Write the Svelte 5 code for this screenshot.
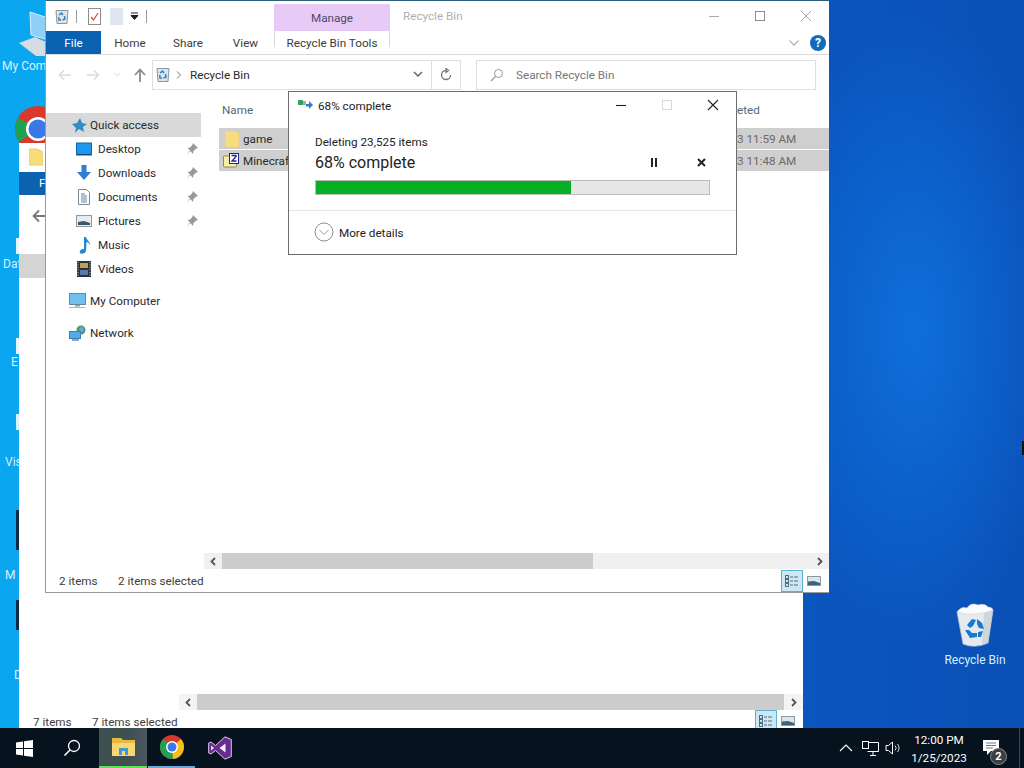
<script>
  const pinned = [
    { label: 'Desktop', kind: 'desktop' },
    { label: 'Downloads', kind: 'downloads' },
    { label: 'Documents', kind: 'documents' },
    { label: 'Pictures', kind: 'pictures' }
  ];
  const percent = 68;
</script>

{#snippet bin(w, h)}
  <svg width={w} height={h} viewBox="0 0 40 44">
    <path d="M2 9 L38 7 L33 40 Q20 46 8 41 Z" fill="#e6eaee" stroke="#b4c0c9" stroke-width=".8"/>
    <path d="M27 41 L33 40 L38 7 L29 10Z" fill="#c8d0d6" opacity=".8"/>
    <path d="M2 9 Q6 3 12 5 Q16 -1 23 2 Q30 0 33 4 Q37 4 38 7 Q20 14 2 9Z" fill="#fbfcfd" stroke="#cfd8de" stroke-width=".6"/>
    <path d="M12 22 L17 16 L21 17 L18 23 L15 25 Z M22 16 L27 20 L29 26 L24 25 L22 21 Z M10 27 L14 27 L17 30 L22 30 L22 34 L15 35 Z M23 29 L28 28 L26 34 L23 34 Z" fill="#1679d2"/>
  </svg>
{/snippet}

{#snippet qbin(w, h)}
  <svg width={w} height={h} viewBox="0 0 14 15"><path d="M1 1.500h12l-1 13H2Z" fill="#dfe4e8" stroke="#8b959c"/><path d="M4 6l2.500-2 1.500 2M9.500 7L10 10 7.500 11M6 11H4L3.800 8" fill="none" stroke="#2a84cc" stroke-width="1.500"/></svg>
{/snippet}

{#snippet chevL()}
  <svg width="6" height="9" viewBox="0 0 6 9"><path d="M5 1L1.500 4.500 5 8" fill="none" stroke="#555" stroke-width="1.800"/></svg>
{/snippet}
{#snippet chevR()}
  <svg width="6" height="9" viewBox="0 0 6 9"><path d="M1 1l3.500 3.500L1 8" fill="none" stroke="#555" stroke-width="1.800"/></svg>
{/snippet}

{#snippet views()}
  <div class="views">
    <span class="view on">
      <svg width="22" height="22" viewBox="0 0 22 22"><g fill="none" stroke="#5b6b78"><rect x="4.500" y="5.500" width="3" height="3"/><rect x="4.500" y="9.500" width="3" height="3"/><rect x="4.500" y="13.500" width="3" height="3"/><path d="M9 7h3M13 7h4M9 11h3M13 11h4M9 15h3M13 15h4"/></g></svg>
    </span>
    <span class="view">
      <svg width="16" height="22" viewBox="0 0 16 22"><rect x="1.500" y="6.500" width="13" height="9" fill="#dbe6ec" stroke="#8b98a2"/><path d="M2 15 L2 11.500 L8 11 L14 13 L14 15Z" fill="#3d6478"/></svg>
    </span>
  </div>
{/snippet}

{#snippet navIcon(kind)}
  {#if kind === 'desktop'}
    <svg width="16" height="14" viewBox="0 0 16 14"><rect x=".5" y="1" width="15" height="12" fill="#1b97ec" stroke="#0f63a8"/><path d="M1 12.500h14" stroke="#0b4a80"/></svg>
  {:else if kind === 'downloads'}
    <svg width="16" height="16" viewBox="0 0 16 16"><path d="M5.500 0h5v7H15L8 15 1 7h4.500Z" fill="#2f7fd0"/></svg>
  {:else if kind === 'documents'}
    <svg width="12" height="16" viewBox="0 0 12 16"><path d="M.5.500h8l3 3v12H.5Z" fill="#fff" stroke="#7f8c95"/><path d="M3 5h4M3 7h6M3 9h6M3 11h6M3 13h6" stroke="#5d87a5"/></svg>
  {:else if kind === 'pictures'}
    <svg width="16" height="12" viewBox="0 0 16 12"><rect x=".5" y=".5" width="15" height="11" fill="#e6edf2" stroke="#8d99a3"/><path d="M2 10V7l6-1 6 2v2Z" fill="#3c5866"/></svg>
  {:else if kind === 'music'}
    <svg width="13" height="17" viewBox="0 0 13 17"><path d="M6 0h2c.5 3 4 4 4 8-1-2-2-3-3.500-3L8 14c-.3 2-3.500 3.500-5.500 2.500C.5 15 2.500 11.500 6 12Z" fill="#1f88d8"/></svg>
  {:else if kind === 'videos'}
    <svg width="14" height="16" viewBox="0 0 14 16"><rect width="14" height="16" fill="#2c3038"/><rect x="3" y="2" width="8" height="5" fill="#b9a054"/><rect x="3" y="9" width="8" height="5" fill="#5c78a8"/><path d="M1 1v14M13 1v14" stroke="#cfd4d8" stroke-dasharray="1 1.500"/></svg>
  {:else if kind === 'computer'}
    <svg width="17" height="16" viewBox="0 0 17 16"><rect x=".5" y=".5" width="16" height="11" fill="#6fc0ee" stroke="#6d8797"/><path d="M6 12h5v1.500H6Z" fill="#8ea0ac"/><path d="M0 14.500h16" stroke="#a8b4bc"/></svg>
  {:else if kind === 'network'}
    <svg width="17" height="16" viewBox="0 0 17 16"><circle cx="12" cy="5" r="4.500" fill="#4a9b78"/><path d="M10 3l3-1 2 3-3 3Z" fill="#6ba8d8"/><rect x=".5" y="6.500" width="11" height="7" fill="#53ace6" stroke="#3a7fb0"/><path d="M3 15h7" stroke="#6c8a9c" stroke-width="1.500"/></svg>
  {/if}
{/snippet}

<div class="desktop">
  <div class="wall"></div>

  <div class="dicon pc">
    <svg width="30" height="46" viewBox="0 0 30 46"><path d="M12 2 L30 8 V30 L13 25Z" fill="#8fd0f6" stroke="#d8eefb"/><path d="M1 33 L17 27 L30 33 V46 H18Z" fill="#d5dde2"/></svg>
  </div>
  <span class="dlabel" style="left:2px;top:58px">My Com</span>
  <div class="chrome-back">
    <svg width="46" height="46" viewBox="0 0 46 46"><circle cx="23" cy="23" r="23" fill="#d8392c"/><path d="M23 23 L4 36 A23 23 0 0 1 3 12Z" fill="#1fa254"/><circle cx="23" cy="23" r="12" fill="#fff"/><circle cx="23" cy="23" r="9.500" fill="#3878e8"/></svg>
  </div>
  <span class="dlabel" style="left:3px;top:256px">Dat</span>
  <span class="dlabel" style="left:11px;top:354px">E</span>
  <span class="dlabel" style="left:5px;top:454px">Vis</span>
  <span class="dlabel" style="left:5px;top:567px">M</span>
  <span class="dlabel" style="left:14px;top:667px">D</span>
  <i class="nub" style="top:238px"></i><i class="nub" style="top:338px"></i><i class="nub" style="top:414px;background:#d9f1fb"></i><i class="nub" style="top:510px;height:40px;background:#0b2a48"></i><i class="nub" style="top:600px;height:30px;background:#0b2a48"></i>

  <div class="dicon rb">
    {@render bin(40, 44)}
    <span class="rbl">Recycle Bin</span>
  </div>

  <!-- window behind -->
  <section class="back">
    <div class="back-head">
      <div class="back-tb">
        <svg width="14" height="18" viewBox="0 0 14 18"><path d="M0 1h8l6 3v13H0Z" fill="#f7dc7c" stroke="#e8cd70"/></svg>
      </div>
      <div class="back-file">F</div>
      <div class="back-nav">
        <svg width="14" height="14" viewBox="0 0 14 14"><path d="M14 7H2M7 1.500L1.500 7 7 12.500" fill="none" stroke="#7a7a7a" stroke-width="1.800"/></svg>
      </div>
      <div class="back-gray"></div>
    </div>
    <div class="spacer"></div>
    <div class="hscroll back-scroll">
      <span class="arrow">{@render chevL()}</span>
      <span class="thumb"></span>
      <span class="arrow end">{@render chevR()}</span>
    </div>
    <div class="status back-status">
      <span class="s1">7 items</span><span class="s2">7 items selected</span>
      {@render views()}
    </div>
  </section>

  <!-- explorer window -->
  <section class="win">
    <header class="title">
      <div class="qat">
        {@render qbin(14, 15)}
        <i class="sep"></i>
        <svg width="13" height="17" viewBox="0 0 13 17"><rect x=".5" y=".5" width="12" height="16" fill="#fff" stroke="#8c8c8c"/><path d="M3 9l2.500 3L10 5" fill="none" stroke="#d6473a" stroke-width="1.200"/></svg>
        <span class="blank"></span>
        <svg class="caret" width="9" height="8" viewBox="0 0 9 8"><path d="M1 1h7M1 3.500h7L4.500 7.500Z" stroke="#222" fill="#222"/></svg>
        <i class="sep last"></i>
      </div>
      <div class="manage">Manage</div>
      <div class="wname">Recycle Bin</div>
      <div class="caps">
        <svg width="14" height="14" viewBox="0 0 14 14"><path d="M2 7.500h10" stroke="#a9a9a9"/></svg>
        <svg width="14" height="14" viewBox="0 0 14 14"><rect x="2.500" y="2.500" width="9" height="9" fill="none" stroke="#8f8f8f"/></svg>
        <svg width="14" height="14" viewBox="0 0 14 14"><path d="M2 2l10 10M12 2L2 12" stroke="#a9a9a9"/></svg>
      </div>
    </header>

    <nav class="tabs">
      <span class="file">File</span>
      <span class="tab">Home</span>
      <span class="tab">Share</span>
      <span class="tab">View</span>
      <span class="rbt">Recycle Bin Tools</span>
      <span class="grow"></span>
      <svg width="12" height="8" viewBox="0 0 12 8"><path d="M1.500 1.500L6 6l4.500-4.500" fill="none" stroke="#b5b5b5" stroke-width="1.300"/></svg>
      <span class="help">?</span>
    </nav>

    <div class="addr">
      <div class="navs">
        <svg width="16" height="14" viewBox="0 0 16 14"><path d="M14 7H3M7 2.500L2.500 7 7 11.500" fill="none" stroke="#dcdcdc" stroke-width="1.600"/></svg>
        <svg width="16" height="14" viewBox="0 0 16 14"><path d="M2 7h11M9 2.500L13.500 7 9 11.500" fill="none" stroke="#dcdcdc" stroke-width="1.600"/></svg>
        <svg width="8" height="6" viewBox="0 0 8 6"><path d="M1 1l3 3 3-3" fill="none" stroke="#e0e0e0"/></svg>
        <svg width="14" height="16" viewBox="0 0 14 16"><path d="M7 15V3M2 8l5-5.500L12 8" fill="none" stroke="#8a8a8a" stroke-width="1.800"/></svg>
      </div>
      <div class="pathbox">
        {@render qbin(14, 15)}
        <svg width="6" height="8" viewBox="0 0 6 8"><path d="M1 .5L4.500 4 1 7.500" fill="none" stroke="#777"/></svg>
        <span class="pname">Recycle Bin</span>
        <span class="grow"></span>
        <svg class="dd" width="10" height="7" viewBox="0 0 10 7"><path d="M1 1l4 4 4-4" fill="none" stroke="#666" stroke-width="1.500"/></svg>
        <span class="refresh">
          <svg width="12" height="13" viewBox="0 0 12 13"><path d="M6 2.500A4.500 4.500 0 1 0 10.500 7M6 .5v4L8.500 2.500Z" fill="none" stroke="#777" stroke-width="1.300"/></svg>
        </span>
      </div>
      <div class="search">
        <svg width="14" height="14" viewBox="0 0 14 14"><circle cx="8.500" cy="5.500" r="4" fill="none" stroke="#9a9a9a"/><path d="M5.500 8.500L1 13" stroke="#9a9a9a" stroke-width="1.300"/></svg>
        <span>Search Recycle Bin</span>
      </div>
    </div>

    <div class="main">
      <aside class="side">
        <div class="nav-row qa">
          <svg width="16" height="15" viewBox="0 0 16 15"><path d="M9 0l2 5 5 1-4 3 1 5-5-3-4 4 1-5L1 6l5-1Z" fill="#2f8dc8"/></svg>
          <span>Quick access</span>
        </div>
        {#each pinned as p}
          <div class="nav-row sub">
            <span class="ni">{@render navIcon(p.kind)}</span>
            <span>{p.label}</span>
            <svg class="pin" width="12" height="12" viewBox="0 0 12 12"><path d="M7 0l5 5-2 .8L7.500 8 7 11 4.500 8 1 11.500 4 7.500 1.500 5 4 4.500 6.200 2.200Z" fill="#9a9a9a"/></svg>
          </div>
        {/each}
        <div class="nav-row sub"><span class="ni">{@render navIcon('music')}</span><span>Music</span></div>
        <div class="nav-row sub"><span class="ni">{@render navIcon('videos')}</span><span>Videos</span></div>
        <div class="nav-row top gap"><span class="ni2">{@render navIcon('computer')}</span><span>My Computer</span></div>
        <div class="nav-row top gap"><span class="ni2">{@render navIcon('network')}</span><span>Network</span></div>
      </aside>

      <div class="list">
        <div class="lhead">
          <span class="hname">Name</span>
          <span class="hdate">eted</span>
        </div>
        <div class="row">
          <svg width="14" height="16" viewBox="0 0 14 16"><path d="M0 0h9l5 2v14H0Z" fill="#f8dc80" stroke="#ecd078" stroke-width=".6"/></svg>
          <span class="fname">game</span>
          <span class="fdate">3 11:59 AM</span>
        </div>
        <div class="row">
          <svg class="mc" width="16" height="15" viewBox="0 0 16 15"><rect x=".5" y="3" width="13" height="11" rx="1" fill="#f7eea8" stroke="#8a8a5c"/><rect x="6.500" y=".5" width="9" height="10" fill="#fff" stroke="#22228c"/><path d="M8.500 2.500h4.500v1L9 8h4.500" fill="none" stroke="#2020a8" stroke-width="1.300"/></svg>
          <span class="fname">Minecraft</span>
          <span class="fdate">3 11:48 AM</span>
        </div>
        <div class="spacer"></div>
        <div class="hscroll">
          <span class="arrow">{@render chevL()}</span>
          <span class="thumb"></span>
          <span class="arrow end">{@render chevR()}</span>
        </div>
      </div>
    </div>

    <footer class="status">
      <span class="s1">2 items</span><span class="s2">2 items selected</span>
      {@render views()}
    </footer>
  </section>

  <!-- progress dialog -->
  <section class="dialog">
    <header class="dtitle">
      <svg width="15" height="10" viewBox="0 0 15 10"><rect x="0" y="0" width="5" height="5" fill="#3e9e62"/><rect x="5" y="1" width="3" height="4" fill="#9bb7a6"/><path d="M8 4h3V1l4 4-4 4V6.500H8Z" fill="#2f7fc8"/></svg>
      <span class="dname">{percent}% complete</span>
      <span class="grow"></span>
      <div class="dcaps">
        <svg width="12" height="12" viewBox="0 0 12 12"><path d="M1 6.500h10" stroke="#222" stroke-width="1.100"/></svg>
        <svg width="12" height="12" viewBox="0 0 12 12"><rect x="1.500" y="1.500" width="9" height="9" fill="none" stroke="#d8d8d8"/></svg>
        <svg width="12" height="12" viewBox="0 0 12 12"><path d="M1 1l10 10M11 1L1 11" stroke="#222" stroke-width="1.100"/></svg>
      </div>
    </header>
    <div class="dbody">
      <div class="deleting">Deleting 23,525 items</div>
      <div class="pct">
        <span>{percent}% complete</span>
        <span class="grow"></span>
        <svg class="pause" width="8" height="9" viewBox="0 0 8 9"><path d="M1 0h2v9H1ZM5 0h2v9H5Z" fill="#222"/></svg>
        <svg class="stop" width="9" height="9" viewBox="0 0 9 9"><path d="M1 1l7 7M8 1L1 8" stroke="#222" stroke-width="2"/></svg>
      </div>
      <div class="bar"><div class="fill" style="width:{percent * 0.955}%"></div></div>
    </div>
    <div class="more">
      <svg width="20" height="20" viewBox="0 0 20 20"><circle cx="10" cy="10" r="9" fill="none" stroke="#8f8f8f"/><path d="M5.500 8L10 12.500 14.500 8" fill="none" stroke="#9a9a9a"/></svg>
      <span class="mtext">More details</span>
    </div>
  </section>

  <i class="cursor"></i>

  <!-- taskbar -->
  <footer class="taskbar">
    <span class="tb start">
      <svg width="17" height="17" viewBox="0 0 17 17"><path d="M0 2.500l7-1v6.500H0ZM8 1.300L17 0v8H8ZM0 9h7v6.500l-7-1ZM8 9h9v8l-9-1.300Z" fill="#fff"/></svg>
    </span>
    <span class="tb srch">
      <svg width="18" height="18" viewBox="0 0 18 18"><circle cx="11" cy="7" r="5.500" fill="none" stroke="#fff" stroke-width="1.300"/><path d="M7 11l-5.500 5.500" stroke="#fff" stroke-width="1.600"/></svg>
    </span>
    <span class="tb app active">
      <svg width="23" height="20" viewBox="0 0 23 20"><path d="M0 1h9l2 2h12v15H0Z" fill="#e6b93f"/><path d="M0 6h23v13H0Z" fill="#f7d774"/><rect x="7" y="11" width="9" height="7" fill="#3f9bd0"/><rect x="10" y="14" width="3" height="4" fill="#f7d774"/></svg>
    </span>
    <span class="tb app run">
      <svg width="24" height="24" viewBox="0 0 24 24"><circle cx="12" cy="12" r="12" fill="#d8392c"/><path d="M12 12L22.400 18 A12 12 0 0 0 24 12 A12 12 0 0 0 21 4 Z" fill="#f3c21c"/><path d="M12 12 L13 24 A12 12 0 0 1 0 12 A12 12 0 0 1 3 4 Z" fill="#1fa254"/><path d="M12 12 L13 24 A12 12 0 0 0 22.400 18Z" fill="#f3c21c"/><circle cx="12" cy="12" r="6" fill="#fff"/><circle cx="12" cy="12" r="4.500" fill="#3878e8"/></svg>
    </span>
    <span class="tb app">
      <svg width="24" height="24" viewBox="0 0 24 24"><path d="M17 .8L23.300 3.500V20.500L17 23.200 7.500 14.500 3 18 .7 17V7L3 6 7.500 9.500Z" fill="#6b2a8f" stroke="#e9e0f0" stroke-width=".9"/><path d="M17.500 7.500L11.500 12l6 4.500Z" fill="#f4eff7"/><path d="M3.200 9.500L6 12l-2.800 2.500Z" fill="#f4eff7"/></svg>
    </span>
    <span class="grow"></span>
    <div class="tray">
      <svg class="up" width="14" height="8" viewBox="0 0 14 8"><path d="M1 7l6-6 6 6" fill="none" stroke="#fff" stroke-width="1.100"/></svg>
      <svg width="17" height="15" viewBox="0 0 17 15"><path d="M5.500 1.500h11v9h-11M8 14.500h6M11 10.500v4" fill="none" stroke="#fff"/><rect x=".5" y=".5" width="6" height="7" fill="#06121e" stroke="#fff"/></svg>
      <svg width="16" height="14" viewBox="0 0 16 14"><path d="M1 4.500h2.500L7.500 1v12L3.500 9.500H1Z" fill="none" stroke="#fff"/><path d="M10 4.500a3.500 3.500 0 0 1 0 5M12.500 3a6 6 0 0 1 0 8" fill="none" stroke="#ddd"/></svg>
    </div>
    <div class="clock"><span>12:00 PM</span><span>1/25/2023</span></div>
    <div class="notif">
      <svg width="16" height="16" viewBox="0 0 16 16"><path d="M0 0h16v11H8l-4 4v-4H0Z" fill="#fff"/><path d="M3 3h10M3 5.500h10M3 8h7" stroke="#777"/></svg>
      <span class="badge">2</span>
    </div>
    <i class="edge"></i>
  </footer>
</div>

<style>
  :global(body) { margin: 0; overflow: hidden; }
  .desktop {
    position: relative; width: 1024px; height: 768px; overflow: hidden;
    font: 11.7px Roboto, "Noto Sans", sans-serif; color: #2a2a2a;
  }
  .wall {
    position: absolute; inset: 0;
    background:
      radial-gradient(ellipse 150px 320px at 915px 330px, #0f6fdc 0%, rgba(15,111,220,0) 100%),
      linear-gradient(90deg, #0aa6ef 0 60px, #0a55bd 830px, #0a50b6 1024px);
  }
  .grow, .spacer { flex: 1; }
  svg { display: block; flex: none; }

  .dicon { position: absolute; }
  .pc { left: 18px; top: 10px; }
  .chrome-back { position: absolute; left: 15px; top: 106px; }
  .dlabel { position: absolute; color: #d8f1fd; font-size: 12px; line-height: 16px; white-space: nowrap; }
  .nub { position: absolute; left: 16px; width: 3px; height: 16px; background: #e8f6fc; }
  .rb { left: 940px; top: 603px; width: 70px; display: flex; flex-direction: column; align-items: center; gap: 5px; color: #d6eefc; }
  .rbl { font-size: 12px; line-height: 16px; white-space: nowrap; }

  .back {
    position: absolute; left: 19px; top: 143px; width: 784px; height: 589px;
    background: #fff; display: flex; flex-direction: column;
  }
  .back-head { width: 26px; }
  .back-tb { height: 29px; padding: 5px 0 0 10px; box-sizing: border-box; }
  .back-file { height: 23px; background: #0a62b0; color: #fff; padding-left: 20px; box-sizing: border-box; line-height: 23px; }
  .back-nav { height: 59px; box-sizing: border-box; padding: 14px 0 0 13px; }
  .back-gray { height: 24px; background: #d4d4d4; }
  .hscroll { height: 16px; display: flex; align-items: center; background: #f0f0f0; flex: none; }
  .back-scroll { margin-left: 160px; background: #f4f4f4; }
  .arrow { width: 18px; display: flex; justify-content: center; flex: none; }
  .arrow.end { margin-left: auto; }
  .thumb { height: 16px; background: #cdcdcd; }
  .back-scroll .thumb { width: 587px; }
  .status { height: 22px; display: flex; align-items: center; padding-left: 13px; box-sizing: border-box; line-height: 22px; flex: none; color: #3c3c3c; }
  .s1 { width: 59px; }
  .views { margin-left: auto; display: flex; gap: 3px; margin-right: 7px; height: 22px; }
  .view { display: block; height: 22px; box-sizing: border-box; }
  .view.on { background: #cce8f4; outline: 1px solid #5fb0cf; outline-offset: -1px; }
  .back-status { padding-left: 14px; line-height: 24px; }
  .back-status .s1, .back-status .s2 { padding-top: 2px; }

  .win {
    position: absolute; left: 45px; top: 0; width: 784px; height: 593px; box-sizing: border-box;
    background: #fff; display: flex; flex-direction: column;
    border-top: 1px solid #2c5e80; border-left: 1px solid #9a9a9a; border-bottom: 1px solid #9a9a9a;
  }
  .title { height: 30px; display: flex; position: relative; flex: none; }
  .qat { display: flex; align-items: center; height: 30px; padding-left: 9px; width: 228px; box-sizing: border-box; flex: none; }
  .qat .sep { width: 1px; height: 13px; background: #9a9a9a; margin: 0 11px 0 7px; }
  .qat .blank { width: 13px; height: 17px; background: #dfe6f0; margin: 0 7px 0 9px; }
  .qat .sep.last { margin-left: 7px; }
  .manage {
    margin-top: 3px; width: 116px; height: 27px; background: #e7cbf6; color: #4d4a66;
    text-align: center; line-height: 28px; flex: none;
  }
  .wname { margin-left: 13px; color: #b0b0b0; line-height: 30px; }
  .caps { margin-left: auto; display: flex; gap: 32px; padding-top: 8px; padding-right: 16px; box-sizing: border-box; }
  .tabs {
    height: 24px; display: flex; align-items: center; flex: none; box-sizing: border-box;
    border-bottom: 1px solid #dadada; padding-right: 3px;
  }
  .file { width: 55px; height: 23px; line-height: 24px; background: #0a62b0; color: #fff; text-align: center; flex: none; }
  .tab { width: 58px; height: 23px; text-align: center; line-height: 25px; color: #3b3b3b; flex: none; }
  .tab:nth-of-type(4) { width: 57px; }
  .rbt {
    width: 116px; text-align: center; height: 16px; line-height: 25px; flex: none; align-self: flex-start; color: #3b3b3b;
    border-left: 1px solid #d8d8d8; border-right: 1px solid #d8d8d8; box-sizing: border-box;
  }
  .help {
    width: 16px; height: 16px; border-radius: 50%; background: #0f6cbd; color: #fff; font-weight: 700;
    text-align: center; line-height: 16px; margin-left: 10px; font-size: 12px;
  }
  .addr { height: 38px; display: flex; align-items: center; flex: none; padding: 1px 0 0 11px; box-sizing: border-box; }
  .navs { width: 95px; display: flex; align-items: center; gap: 12px; box-sizing: border-box; flex: none; }
  .pathbox {
    width: 309px; height: 30px; border: 1px solid #dedede; box-sizing: border-box; display: flex; align-items: center; flex: none;
    gap: 6px; padding-left: 3px; color: #2a2a2a;
  }
  .pname { margin-left: 2px; }
  .dd { margin-right: 8px; }
  .refresh { width: 28px; height: 28px; border-left: 1px solid #dedede; display: flex; align-items: center; justify-content: center; margin-left: -6px; }
  .search {
    margin-left: 15px; flex: none; width: 340px; height: 30px; border: 1px solid #dedede; box-sizing: border-box;
    display: flex; align-items: center; gap: 12px; padding-left: 13px; color: #787878;
  }
  .main { flex: 1; display: flex; min-height: 0; }
  .side { width: 158px; flex: none; padding-top: 20px; box-sizing: border-box; }
  .nav-row { height: 24px; display: flex; align-items: center; white-space: nowrap; width: 155px; box-sizing: border-box; position: relative; }
  .qa { background: #d9d9d9; padding-left: 25px; gap: 3px; }
  .sub { padding-left: 29px; }
  .ni { width: 18px; display: flex; justify-content: center; margin-right: 5px; }
  .ni2 { width: 18px; display: flex; justify-content: center; margin-right: 4px; }
  .top { padding-left: 22px; }
  .gap { margin-top: 8px; }
  .pin { position: absolute; right: 3px; top: 6px; }
  .list { flex: 1; min-width: 0; display: flex; flex-direction: column; }
  .lhead { height: 35px; position: relative; color: #56667a; }
  .hname { position: absolute; left: 18px; top: 9px; line-height: 16px; }
  .hdate { position: absolute; left: 533px; top: 9px; line-height: 16px; }
  .row {
    margin-left: 15px; height: 21px; margin-bottom: 1px; background: #cfcfcf; display: flex; align-items: center;
    padding-left: 6px; gap: 4px; position: relative; flex: none;
  }
  .mc { margin-left: -2px; }
  .fdate { position: absolute; left: 518px; color: #6a6a6a; }
  .list .hscroll { margin-bottom: 1px; }
  .list .thumb { width: 371px; }

  .dialog {
    position: absolute; left: 288px; top: 91px; width: 449px; height: 164px; box-sizing: border-box;
    background: #fff; border: 1px solid #6d6d6d; display: flex; flex-direction: column; color: #222;
  }
  .dtitle { height: 26px; display: flex; align-items: center; gap: 5px; padding-left: 9px; flex: none; }
  .dname { padding-top: 2px; }
  .dcaps { display: flex; gap: 34px; margin-right: 17px; }
  .dbody { padding: 15px 26px 0; height: 93px; box-sizing: border-box; border-bottom: 1px solid #e6e6e6; flex: none; }
  .deleting { line-height: 18px; }
  .pct { display: flex; align-items: center; font-size: 16px; line-height: 24px; height: 23px; }
  .pause { margin-right: 39px; }
  .stop { margin-right: 4px; }
  .bar { height: 15px; margin-top: 6px; background: #e6e6e6; box-sizing: border-box; border: 1px solid #bcbcbc; }
  .fill { height: 100%; background: #06b025; }
  .more { flex: 1; display: flex; align-items: center; gap: 5px; padding-left: 25px; padding-bottom: 1px; }
  .mtext { padding-top: 2px; }

  .cursor { position: absolute; left: 1022px; top: 441px; width: 2px; height: 14px; background: #111; }

  .taskbar {
    position: absolute; left: 0; bottom: 0; width: 1024px; height: 40px; background: #06121e;
    display: flex; align-items: center; color: #fff;
  }
  .tb { height: 40px; display: flex; align-items: center; justify-content: center; flex: none; box-sizing: border-box; }
  .start { width: 48px; }
  .srch { width: 51px; padding-right: 4px; }
  .app { width: 48px; }
  .active { background: linear-gradient(90deg, #3f5050 0 60%, #4a5660 100%); border-bottom: 2px solid #5ee05a; }
  .run { border-bottom: 2px solid #6aa8d8; margin: 0 1px; width: 47px; }
  .tray { display: flex; align-items: center; gap: 6px; margin-right: 10px; }
  .up { margin-right: 3px; }
  .clock { display: flex; flex-direction: column; align-items: center; line-height: 18px; width: 56px; margin-right: 10px; padding-top: 1px; }
  .notif { position: relative; width: 30px; height: 40px; margin-right: 17px; padding: 12px 0 0 6px; box-sizing: border-box; }
  .badge {
    position: absolute; left: 13px; top: 20px; width: 17px; height: 17px; border-radius: 50%; background: #3a3f45;
    border: 1px solid #8a8a8a; box-sizing: border-box; text-align: center; line-height: 15px; font-size: 11px; font-weight: 700;
  }
  .edge { position: absolute; left: 1019px; top: 0; width: 1px; height: 40px; background: #3b4650; }
</style>
